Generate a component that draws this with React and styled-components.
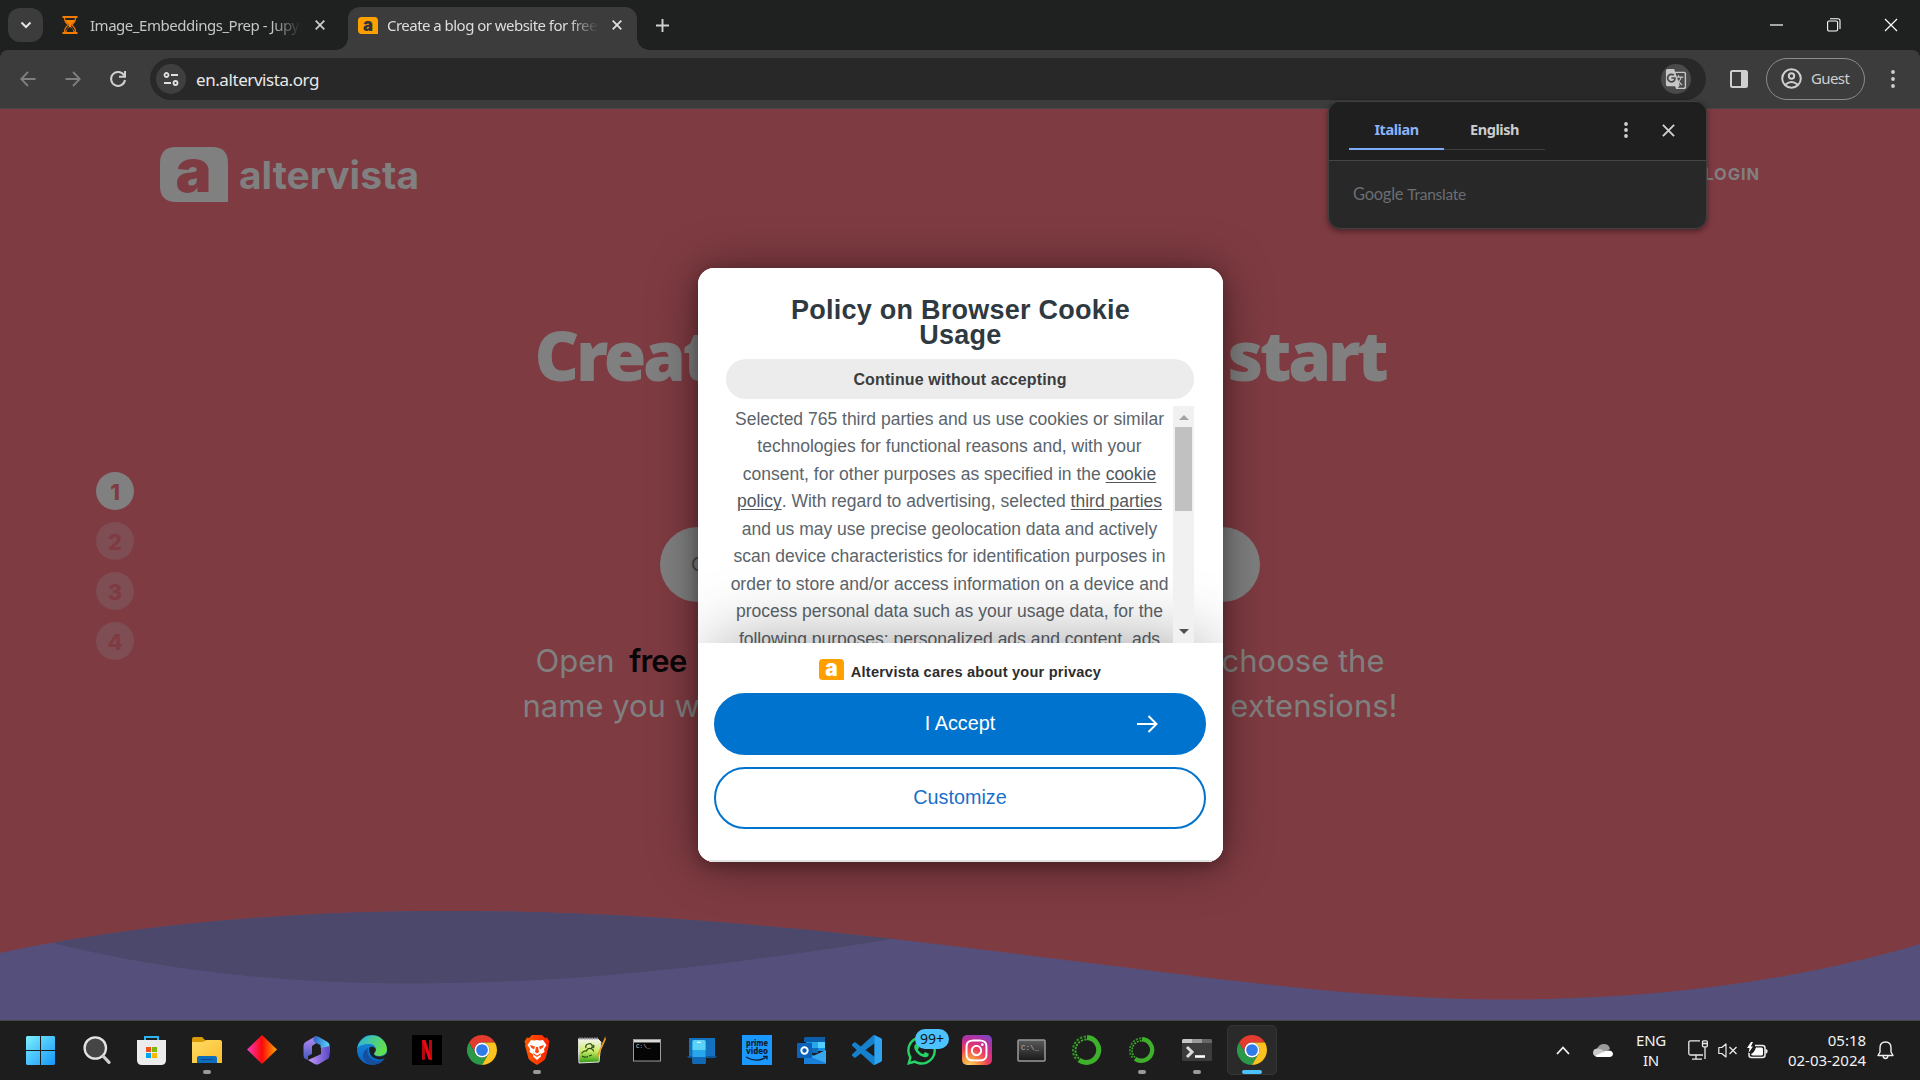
import React from "react";
import styled, { createGlobalStyle, css } from "styled-components";
import { MdGTranslate } from "react-icons/md";
import { FaWhatsapp, FaInstagram } from "react-icons/fa";

const ui = `"Noto Sans", "Open Sans", sans-serif`;
const arial = `"Liberation Sans", Arial, sans-serif`;
const geo = `Inter, "Open Sans", sans-serif`;

const Global = createGlobalStyle`
  *, *::before, *::after { box-sizing: border-box; }
  body { margin: 0; background: #1d1d1d; overflow: hidden; }
  svg { display: block; flex: none; }
  button { font: inherit; border: 0; padding: 0; background: none; color: inherit; }
`;

const Screen = styled.div`
  width: 1920px;
  height: 1080px;
  display: flex;
  flex-direction: column;
  font-family: ${ui};
  overflow: hidden;
`;

/* ---------- browser frame ---------- */
const TabStrip = styled.div`
  height: 50px;
  flex: none;
  display: flex;
  align-items: flex-end;
  background: #1f2120;
  padding-left: 8px;
`;
const TabSearch = styled.button`
  width: 35px;
  height: 34px;
  margin-bottom: 8px;
  border-radius: 12px;
  background: #3c3c3c;
  display: grid;
  place-items: center;
`;
const Tab = styled.div`
  position: relative;
  height: 43px;
  width: ${(p) => p.$w}px;
  padding: 0 10px 7px ${(p) => p.$pl}px;
  display: flex;
  align-items: center;
  color: ${(p) => (p.$active ? "#dedede" : "#c4c7c5")};
  ${(p) =>
    p.$active &&
    css`
      background: #3c3c3c;
      border-radius: 12px 12px 0 0;
      &::before,
      &::after {
        content: "";
        position: absolute;
        bottom: 0;
        width: 12px;
        height: 12px;
      }
      &::before {
        left: -12px;
        background: radial-gradient(circle at 0 0, transparent 11.5px, #3c3c3c 12px);
      }
      &::after {
        right: -12px;
        background: radial-gradient(circle at 100% 0, transparent 11.5px, #3c3c3c 12px);
      }
    `}
`;
const TabTitle = styled.span`
  width: 211px;
  margin-left: ${(p) => p.$ml}px;
  margin-right: 14px;
  overflow: hidden;
  white-space: nowrap;
  font-size: 15px;
  line-height: 22px;
  letter-spacing: ${(p) => p.$ls}px;
  mask-image: linear-gradient(to right, #000 86%, transparent 100%);
`;
const NewTab = styled.div`
  width: 48px;
  height: 50px;
  display: grid;
  place-items: center;
  padding: 0 0 0 2px;
`;
const WinControls = styled.div`
  margin-left: auto;
  height: 50px;
  display: flex;
  align-items: center;
  padding-right: 1px;
`;
const WinButton = styled.div`
  width: 57px;
  height: 48px;
  display: grid;
  place-items: center;
`;
const Toolbar = styled.div`
  height: 59px;
  flex: none;
  background: #3c3c3c;
  border-bottom: 1px solid #4b4744;
  border-radius: 8px 8px 0 0;
  display: flex;
  align-items: center;
`;
const ToolbarBack = styled.div`
  background: #1f2120;
`;
const NavButton = styled.div`
  width: 45px;
  display: grid;
  place-items: center;
`;
const Nav = styled.div`
  display: flex;
  padding-left: 5px;
  width: 150px;
`;
const Omnibox = styled.div`
  width: 1556px;
  height: 42px;
  border-radius: 21px;
  background: #282828;
  display: flex;
  align-items: center;
  padding: 0 15px 0 6px;
`;
const RoundChip = styled.div`
  width: 30px;
  height: 30px;
  border-radius: 50%;
  background: ${(p) => p.$bg};
  color: #c7c7c7;
  display: grid;
  place-items: center;
`;
const Url = styled.span`
  flex: 1;
  margin-left: 10px;
  color: #e8e8e8;
  font-size: 17px;
  letter-spacing: -0.43px;
`;
const GuestPill = styled.div`
  width: 99px;
  height: 42px;
  margin-left: 18px;
  border: 1px solid #8c8c8c;
  border-radius: 21px;
  display: flex;
  align-items: center;
  padding: 0 0 2px 14px;
  gap: 9px;
  color: #cfcfcf;
  font-size: 15px;
  letter-spacing: -0.6px;
`;
const SidePanel = styled.div`
  margin-left: 24px;
`;
const Menu = styled.div`
  width: 54px;
  padding-left: 1px;
  display: grid;
  place-items: center;
`;

/* ---------- translate bubble ---------- */
const Bubble = styled.div`
  position: absolute;
  z-index: 5;
  left: 1328px;
  top: 101px;
  width: 379px;
  height: 128px;
  border-radius: 12px;
  border: 1px solid #3f4042;
  background: #282828;
  box-shadow: 0 2px 6px rgba(0, 0, 0, 0.45);
  overflow: hidden;
`;
const BubbleTop = styled.div`
  height: 59px;
  background: #1f1f1f;
  border-bottom: 1px solid #444548;
  display: flex;
  padding: 8px 0 0 20px;
`;
const Lang = styled.div`
  width: ${(p) => p.$w}px;
  height: 40px;
  display: grid;
  place-items: center;
  padding-bottom: 1px;
  font-size: 14.5px;
  font-weight: 700;
  letter-spacing: -0.45px;
  color: ${(p) => (p.$on ? "#8ab4f8" : "#cdcdcd")};
  border-bottom: ${(p) => (p.$on ? "2px solid #7cacf8" : "1px solid #3d3e40")};
`;
const BubbleIcon = styled.div`
  width: 42px;
  height: 40px;
  margin-left: ${(p) => p.$ml || 0}px;
  display: grid;
  place-items: center;
`;
const GoogleTranslate = styled.div`
  padding: 21px 0 0 24px;
  font-family: Lato, sans-serif;
  font-size: 16.5px;
  line-height: 24px;
  letter-spacing: -0.25px;
  color: #6b6e73;
  & span { font-size: 15.5px; }
`;

/* ---------- web page ---------- */
const Page = styled.div`
  position: relative;
  flex: none;
  height: 911px;
  background: #7f3b42;
  display: flex;
  flex-direction: column;
  overflow: hidden;
  color: #808080;
  font-family: ${geo};
`;
const Header = styled.div`
  height: 93px;
  padding: 38px 160px 0 160px;
  display: flex;
  justify-content: space-between;
`;
const Login = styled.span`
  font-size: 16.5px;
  line-height: 54px;
  font-weight: 700;
  letter-spacing: 0.9px;
`;
const Body = styled.div`
  display: grid;
  grid-template-columns: 134px 1fr 134px;
`;
const Steps = styled.div`
  display: flex;
  flex-direction: column;
  gap: 12px;
  padding: 270px 0 0 96px;
`;
const Step = styled.div`
  width: 38px;
  height: 38px;
  border-radius: 50%;
  background: ${(p) => (p.$on ? "#808080" : "#7f4e55")};
  color: #7f3b42;
  font-weight: 800;
  font-size: 22px;
  line-height: 41px;
  text-align: center;
`;
const Hero = styled.div`
  display: flex;
  flex-direction: column;
  align-items: center;
`;
const Spread = styled.div`
  display: flex;
  justify-content: space-between;
  white-space: pre;
`;
const Headline = styled(Spread)`
  width: 851px;
  margin-top: 105px;
  font-family: "Noto Sans", sans-serif;
  font-weight: 900;
  font-size: 69px;
  line-height: 94px;
  letter-spacing: -3.3px;
`;
const NameField = styled.div`
  width: 600px;
  height: 75px;
  margin-top: 126px;
  border-radius: 38px;
  background: #808080;
  color: #454545;
  padding-left: 31px;
  font-size: 19px;
  line-height: 75px;
`;
const Lead = styled(Spread)`
  width: ${(p) => p.$w}px;
  margin-top: ${(p) => p.$mt || 0}px;
  font-size: 31px;
  font-weight: 400;
  line-height: 45px;
  letter-spacing: ${(p) => p.$ls}px;
  & b { color: #0a0607; font-weight: 600; letter-spacing: -0.8px; margin-left: 6px; }
`;
const Waves = styled.div`
  margin-top: auto;
`;

/* ---------- consent dialog ---------- */
const Dialog = styled.div`
  position: absolute;
  left: 698px;
  top: 159px;
  width: 525px;
  height: 594px;
  border-radius: 16px;
  background: #fff;
  overflow: hidden;
  display: flex;
  flex-direction: column;
  font-family: ${arial};
`;
const DialogShade = styled(Dialog)`
  overflow: visible;
  box-shadow: 0 4px 14px rgba(0, 0, 0, 0.25), 0 2px 50px rgba(0, 0, 0, 0.42);
`;
const DialogTitle = styled.h1`
  margin: 30px 0 0;
  text-align: center;
  font-size: 27px;
  line-height: 25px;
  letter-spacing: 0.25px;
  font-weight: 700;
  color: #2f3941;
`;
const ContinueButton = styled.button`
  display: block;
  height: 40px;
  margin: 11px 29px 7px 28px;
  padding-top: 1px;
  flex: none;
  border-radius: 20px;
  background: #ececec;
  color: #3c3c3c;
  font-weight: 700;
  font-size: 16px;
  letter-spacing: 0.13px;
`;
const ScrollArea = styled.div`
  height: 237px;
  flex: none;
  margin: 0 29px 0 28px;
  display: flex;
  overflow: hidden;
`;
const Copy = styled.div`
  flex: 1;
  text-align: center;
  color: #5b646b;
  font-size: 17.5px;
  line-height: 27.45px;
  white-space: nowrap;
  & u { text-underline-offset: 2px; text-decoration-thickness: 1px; color: #50585e; }
`;
const Line = styled.div`
  display: flex;
  justify-content: center;
  white-space: pre;
`;
const Scrollbar = styled.div`
  position: relative;
  z-index: 2;
  width: 21px;
  background: #f1f1f1;
  display: flex;
  flex-direction: column;
  align-items: center;
  padding: 9px 0;
`;
const Thumb = styled.div`
  width: 17px;
  height: 84px;
  margin: 7px 0 auto;
  background: #c1c1c1;
`;
const Caret = styled.div`
  width: 0;
  height: 0;
  border: 5px solid transparent;
  ${(p) =>
    p.$down
      ? css`border-top-color: #505050; border-bottom-width: 0;`
      : css`border-bottom-color: #a3a3a3; border-top-width: 0;`}
`;
const Footer = styled.div`
  position: relative;
  flex: 1;
  background: #fff;
  border-bottom: 2px solid #e2e2e2;
  padding: 16px 17px 0 16px;
  display: flex;
  flex-direction: column;
  box-shadow: 0 -18px 70px -18px rgba(0, 0, 0, 0.38);
`;
const Cares = styled.div`
  height: 20px;
  display: flex;
  justify-content: center;
  gap: 7px;
  color: #2d2d2d;
  font-size: 14.6px;
  line-height: 27px;
  letter-spacing: 0.2px;
  font-weight: 700;
`;
const BigButton = styled.button`
  position: relative;
  width: 492px;
  height: 62px;
  flex: none;
  margin-top: ${(p) => p.$mt}px;
  padding-bottom: 2px;
  border-radius: 31px;
  border: 2px solid #0073ce;
  background: ${(p) => (p.$solid ? "#0073ce" : "#fff")};
  color: ${(p) => (p.$solid ? "#fff" : "#1a70c8")};
  font-size: 19.8px;
`;
const ArrowSlot = styled.span`
  position: absolute;
  right: 46px;
  top: 20px;
`;

/* ---------- taskbar ---------- */
const Taskbar = styled.div`
  height: 60px;
  flex: none;
  background: #1d1d1d;
  border-top: 1px solid #464846;
  display: flex;
  padding-left: 14px;
  color: #f2f2f2;
`;
const Slot = styled.div`
  position: relative;
  width: 55px;
  height: 58px;
  display: grid;
  place-items: center;
`;
const ActiveTile = styled.div`
  width: 50px;
  height: 50px;
  margin: -1px 0 0 0;
  border-radius: 5px;
  border: 1px solid #353535;
  background: #2a2a2a;
  display: grid;
  place-items: center;
`;
const Indicator = styled.i`
  position: absolute;
  bottom: 5px;
  left: 50%;
  transform: translateX(-50%);
  height: 4px;
  border-radius: 2px;
  width: ${(p) => (p.$active ? 20 : 8)}px;
  background: ${(p) => (p.$active ? "#4cc2ff" : "#9a9a9a")};
`;
const CountBadge = styled.span`
  position: absolute;
  left: 21px;
  top: 8px;
  width: 34px;
  height: 20px;
  border-radius: 10px;
  background: #4cc2ff;
  color: #101820;
  font-size: 14px;
  line-height: 20px;
  text-align: center;
`;
const Tray = styled.div`
  margin-left: auto;
  height: 58px;
  display: flex;
  align-items: center;
  padding-right: 26px;
`;
const TrayCell = styled.div`
  margin-left: ${(p) => p.$ml}px;
`;
const TrayText = styled.div`
  margin-left: ${(p) => p.$ml}px;
  padding-bottom: 1px;
  width: ${(p) => p.$w}px;
  text-align: ${(p) => p.$align};
  font-size: 15px;
  line-height: 20px;
  letter-spacing: ${(p) => p.$ls}px;
  white-space: nowrap;
`;

/* ---------- glyphs ---------- */
const Svg = ({ w, h = w, vb, children, ...r }) => (
  <svg width={w} height={h} viewBox={vb || `0 0 ${w} ${h}`} fill="none" {...r}>{children}</svg>
);
const Cross = ({ s = 10, c = "#d0d0d0", w = 1.7 }) => (
  <Svg w={s} vb="0 0 10 10"><path d="M.7.7l8.6 8.6M9.3.7L.7 9.3" stroke={c} strokeWidth={w * 10 / s} /></Svg>
);
const Dots = ({ h = 18 }) => (
  <Svg w={4} h={h}>
    {[2, h / 2, h - 2].map((y) => <circle key={y} cx="2" cy={y} r="1.9" fill="#cfcfcf" />)}
  </Svg>
);
const Mark = ({ w, h, bg, fg, r = 10 }) => (
  <Svg w={w} h={h} vb="0 0 68 55" preserveAspectRatio="none">
    <path d={`M${r + 6} 0H${62 - r}Q68 0 68 ${r + 6}V55H${r + 6}Q0 55 0 ${49 - r}V${r + 6}Q0 0 ${r + 6} 0Z`} fill={bg} />
    <text x="34" y="44.5" textAnchor="middle" textLength="34" lengthAdjust="spacingAndGlyphs" fontFamily="Inter, sans-serif" fontWeight="900" fontSize="60" fill={fg}>a</text>
  </Svg>
);
const Chrome = () => (
  <Svg w={30} vb="0 0 48 48">
    <path d="M24 12h20.78a24 24 0 0 0-41.57 0L13.6 30A12 12 0 0 1 24 12z" fill="#e33b2e" />
    <path d="M13.6 30L3.21 12A24 24 0 0 0 24 48l10.39-18A12 12 0 0 1 13.6 30z" fill="#2a9a48" />
    <path d="M34.39 30L24 48a24 24 0 0 0 20.78-36H24a12 12 0 0 1 10.39 18z" fill="#fcc31e" />
    <circle cx="24" cy="24" r="12" fill="#fff" /><circle cx="24" cy="24" r="9.4" fill="#2f7bea" />
  </Svg>
);
const Grad = ({ id, a, b, m, x2 = 1, y2 = 1 }) => (
  <linearGradient id={id} x1="0" y1="0" x2={x2} y2={y2}>
    <stop stopColor={a} />{m && <stop offset=".5" stopColor={m} />}<stop offset="1" stopColor={b} />
  </linearGradient>
);
const Windows = () => (
  <Svg w={29} style={{ marginRight: 2 }}>
    <defs><linearGradient id="win" gradientUnits="userSpaceOnUse" x1="0" y1="0" x2="29" y2="29"><stop stopColor="#7cf0ff" /><stop offset="1" stopColor="#1496f8" /></linearGradient></defs>
    <path d="M1 0h13v14H0V1zM15 0h13l1 1v13H15zM0 15h14v14H1l-1-1zM15 15h14v13l-1 1H15z" fill="url(#win)" />
  </Svg>
);
const Search = () => (
  <Svg w={28}>
    <circle cx="12.3" cy="12" r="10.7" fill="#454545" stroke="#e4e4e4" strokeWidth="2.3" />
    <path d="M20 20l6 6.3" stroke="#cfcfcf" strokeWidth="3.2" strokeLinecap="round" />
  </Svg>
);
const Store = () => (
  <Svg w={29}>
    <path d="M8 5V1h13v4" stroke="#2cb5f0" strokeWidth="2" />
    <path d="M0 4h29v20q0 5-5 5H5q-5 0-5-5z" fill="#ececec" />
    <path d="M9 11h5v5H9z" fill="#f25022" /><path d="M15 11h5v5h-5z" fill="#7fba00" />
    <path d="M9 17h5v5H9z" fill="#00a4ef" /><path d="M15 17h5v5h-5z" fill="#ffb900" />
  </Svg>
);
const Folder = () => (
  <Svg w={30} h={27}>
    <defs><Grad id="fo" a="#ffdb66" b="#fbbd2c" /></defs>
    <path d="M0 2q0-2 2-2h8l3 3v5H0z" fill="#d99a07" />
    <path d="M0 5h11l3-2h14q2 0 2 2v21H0z" fill="url(#fo)" />
    <path d="M5 26v-5q0-2 2-2h16q2 0 2 2v5z" fill="#0c6cbd" /><path d="M9 22.5h12" stroke="#084a88" />
  </Svg>
);
const Diamond = () => (
  <Svg w={30}><defs><linearGradient id="di"><stop stopColor="#f43ac0" /><stop offset=".5" stopColor="#fb0a0a" /><stop offset="1" stopColor="#ffa800" /></linearGradient></defs>
    <path d="M15 0l15 14.5L15 29 0 14.5z" fill="url(#di)" /></Svg>
);
const M365 = () => (
  <Svg w={27} h={29}>
    <defs><Grad id="ma" a="#b78cf0" b="#4558c4" x2={0} /><Grad id="mb" a="#2c5cc4" b="#58d0f8" x2={1} y2={0.3} /><Grad id="mc" a="#c79af6" b="#5a48c8" x2={1} y2={0} /></defs>
    <path d="M13 0L2.500 6Q.5 7.200.5 10v9.500q0 2.300 2 3.500l2.500 1V20l4-2V10l4.500-3z" fill="url(#ma)" />
    <path d="M11.500 1Q13.500-.3 16 1l8.500 5q2 1.200 2 3.500V17l-9-5V9L12 6.500q-2-1-1.500-4z" fill="url(#mb)" />
    <path d="M26.500 10v9.500q0 2.300-2 3.500L16 28q-2 1.200-4.500 0L5 24l4.500-2 8.500-4V12z" fill="url(#mc)" />
    <path d="M13.500 9l4.500 2.700v5.600L13.500 20 9 17.300v-5.600z" fill="#1d1d1d" />
  </Svg>
);
const Edge = () => (
  <Svg w={30}>
    <defs><Grad id="ea" a="#2ab0e8" b="#62e04c" x2={1} y2={0.3} /><Grad id="eb" a="#1590dc" b="#0a5fc0" x2={0} /></defs>
    <circle cx="15" cy="15" r="15" fill="url(#eb)" />
    <path d="M.3 13A15 15 0 0 1 30 14c0 5-4 7-8 7-3 0-5-1-5-2.500 0-1 2-1.500 2-4C19 11 16 9 12 9 6 9 2 11 .3 13z" fill="url(#ea)" />
    <path d="M11 13c-2 6 2 13 10 13 3 0 5-1 7-3-3 5-8 7-13 7-6-1-9-6-9-9.500 0-3 2-6 5-7.500z" fill="#144f9e" />
    <path d="M12 13q3-3 6 0c2 3-1 4-1 6 0 2 4 3 7 2.500q3-.5 6-3l0 2q-2 4-8 4-10-1-10-11.500z" fill="#1d1d1d" />
  </Svg>
);
const Netflix = () => (
  <Svg w={30}><path d="M0 0h30v30H0z" fill="#000" />
    <path d="M10 5h3v19.500l-3 .5zM17 5h3v20l-3-.5z" fill="#b4070f" /><path d="M10 5h3.500L20 25l-3.500-.5z" fill="#e50914" /></Svg>
);
const BraveIcon = () => (
  <Svg w={26} h={30}>
    <defs><Grad id="br" a="#ff5a00" b="#ff2100" x2={1} y2={0} /></defs>
    <path d="M5 3L8 0h10l3 3 2-.5 2.500 4-1 3 .5 1-3.500 13Q21 25 13 30 5 25 4.500 23.500L1 10.500l.5-1-1-3L3 2.500z" fill="url(#br)" />
    <path d="M7 5l3 .5 3-.5 3 .5 3-.5 3.500 5-2.500 4 .5 3-4 2.500.5 2-4 3.500-4-3.500.5-2L5.500 17l.5-3-2.500-4z" fill="#fff" />
    <path d="M6 10l5 1.500-1 3-3-2zM20 10l-5 1.500 1 3 3-2zM12 12h2l1 5-2 1.500-2-1.500zM9 18l4 2.500 4-2.500-1 2-3 2-3-2z" fill="#fb4a10" />
  </Svg>
);
const Npp = () => (
  <Svg w={28}>
    <defs><Grad id="np" a="#f4f4ee" m="#cdec6a" b="#2f9c10" x2={0} /></defs>
    <path d="M0 3h20l3 3-2 20-20 1z" fill="url(#np)" stroke="#e2e2e2" />
    <path d="M1 2.500h19" stroke="#9a9a9a" strokeWidth="2" strokeDasharray="1.500 1" />
    <path d="M3.500 17.500q2-3 5-2.500 1-3 4-2.500 3 .5 3 3M4 20q3 2 6 .5M8 12q-1-3 2-4t4 1q1 3-2 4M15 9q2 1 0 3M11 20l3-1" stroke="#2a4c12" strokeWidth="1.200" />
    <path d="M27 1l-8 18-1 4 2.500-3L28 3z" fill="#e8a020" /><path d="M26 2l1.500-2 .5 2.500z" fill="#b03020" />
  </Svg>
);
const Cmd = () => (
  <Svg w={28} h={23}><rect x=".5" y=".5" width="27" height="21.500" fill="#050505" stroke="#9c9c9c" /><path d="M1 1h26v2.500H1z" fill="#d8d8d8" />
    <text x="3" y="9" fontFamily="Liberation Mono" fontSize="6" fill="#d0d0d0">C:\_</text></Svg>
);
const Phone = () => (
  <Svg w={30} h={27}><path d="M2 1h26v18H2z" fill="#1272c0" /><path d="M0 19h30l-2 2H2z" fill="#0c5a9e" />
    <rect x="5.500" y="3" width="13" height="24" rx="1.500" fill="#28a8ea" /><path d="M5.500 4.500q0-1.500 1.500-1.500h10q1.500 0 1.500 1.500V13h-13z" fill="#5bd2f8" /><path d="M5.500 20h13v5q0 2-2 2h-9q-2 0-2-2z" fill="#1168b4" /><path d="M10 5.300h4" stroke="#fff" /></Svg>
);
const Prime = () => (
  <Svg w={30}><path d="M0 0h30v30H0z" fill="#1a98ff" />
    <g fontFamily="Noto Sans" fontWeight="800" fontSize="9.500" fill="#0b1c2c" textAnchor="middle"><text x="15" y="10.500" textLength="22" lengthAdjust="spacingAndGlyphs">prime</text><text x="15" y="19" textLength="22" lengthAdjust="spacingAndGlyphs">video</text></g>
    <path d="M4 22q10 6 20 .5M21 21.500h4v3" stroke="#0b1c2c" strokeWidth="1.300" /></Svg>
);
const Outlook = () => (
  <Svg w={29} h={27}><path d="M9 0h19v14H9z" fill="#1490df" /><path d="M7 1.500Q7 0 8.500 0H27q1 0 1 1v4H7z" fill="#0c5ea8" /><path d="M21 5h7v6h-7z" fill="#50d0ff" /><path d="M15 5h6v6h-6z" fill="#28a8ea" /><path d="M15 11h6v5h-6z" fill="#0f6cbd" />
    <path d="M7 14l11 5 11-6v14H7z" fill="#1a7fd8" /><path d="M29 13v13L14 20z" fill="#38a8ee" /><rect y="6" width="15" height="15" rx="1" fill="#0c62b8" />
    <circle cx="7.500" cy="13.500" r="3.200" stroke="#fff" strokeWidth="1.900" /></Svg>
);
const Code = () => (
  <Svg w={30} vb="0 0 24 24"><path d="M23.15 2.587L18.21.21a1.494 1.494 0 0 0-1.705.29l-9.46 8.63-4.12-3.128a.999.999 0 0 0-1.276.057L.327 7.261A1 1 0 0 0 .326 8.740L3.899 12 .326 15.260a1 1 0 0 0 .001 1.479L1.650 17.940a.999.999 0 0 0 1.276.057l4.120-3.128 9.460 8.630a1.492 1.492 0 0 0 1.704.290l4.942-2.377A1.500 1.500 0 0 0 24 20.060V3.939a1.500 1.500 0 0 0-.85-1.352zm-5.146 14.861L10.826 12l7.178-5.448v10.896z" fill="#1580cc" />
    <path d="M18 .1l5.150 2.487a1.500 1.500 0 0 1 .85 1.352V20.060a1.500 1.500 0 0 1-.85 1.350L18 23.900z" fill="#2ea3f0" /></Svg>
);
const InstaTile = styled.div`
  width: 30px;
  height: 30px;
  border-radius: 5px;
  color: #fff;
  display: grid;
  place-items: center;
  background: radial-gradient(circle at 25% 105%, #fed576 0, #f9a03f 20%, #ee3e5c 48%, #c42d95 68%, #6a4bd0 100%);
`;
const Cmd2 = () => (
  <Svg w={29} h={23}><defs><Grad id="cm" a="#5a5a5a" b="#181818" x2={0} /></defs><rect x="1" y="1" width="27" height="21" rx="1" fill="url(#cm)" stroke="#9a9a9a" strokeWidth="1.500" />
    <text x="4" y="11" fontFamily="Liberation Mono" fontSize="7.500" fill="#b5b5b5">C:\_</text></Svg>
);
const Anaconda = ({ s }) => (
  <Svg w={s} vb="0 0 30 30"><path d="M15 2.600A12.400 12.400 0 1 1 7 25" stroke="#3fb02c" strokeWidth="5" />
    <path d="M14.500 4.500A11 11 0 0 0 7 23.500" stroke="#3fb02c" strokeWidth="1.800" strokeDasharray="2.200 1.200" /><path d="M14 1.500A13.800 13.800 0 0 0 5 25" stroke="#2f9022" strokeWidth="2.200" strokeDasharray="2.400 1.500" /></Svg>
);
const Terminal = () => (
  <Svg w={30} h={22}><rect width="30" height="22" rx="1.500" fill="#3c3c3c" /><path d="M0 1.500Q0 0 1.500 0H10v4H0z" fill="#c8c8c8" /><path d="M10 0h10v4H10z" fill="#9a9a9a" /><path d="M20 0h8.500Q30 0 30 1.500V4H20z" fill="#666" />
    <path d="M5 8l5 5-5 5" stroke="#dcdcdc" strokeWidth="3" /><path d="M13 17.500h10" stroke="#fff" strokeWidth="2.600" /></Svg>
);

const apps = [
  [<Windows />], [<Search />], [<Store />], [<Folder />, true], [<Diamond />], [<M365 />], [<Edge />], [<Netflix />], [<Chrome />],
  [<BraveIcon />, true], [<Npp />], [<Cmd />], [<Phone />], [<Prime />], [<Outlook />], [<Code />],
  [<><FaWhatsapp size={33} color="#25d366" /><CountBadge>99+</CountBadge></>],
  [<InstaTile><FaInstagram size={25} /></InstaTile>], [<Cmd2 />], [<Anaconda s={30} />], [<Anaconda s={26} />, true], [<Terminal />, true],
];

export default function App() {
  return (
    <Screen>
      <Global />
      <TabStrip>
        <TabSearch><Svg w={12} h={8}><path d="M1.500 1.500L6 6l4.500-4.500" stroke="#e3e3e3" strokeWidth="2" /></Svg></TabSearch>
        <Tab $w={305} $pl={19}>
          <Svg w={16} h={18}><path d="M.5 1h15M.5 17h15" stroke="#f57c00" strokeWidth="1.800" /><path d="M2.500 2q0 4.500 4 7-4 2.500-4 7M13.500 2q0 4.500-4 7 4 2.500 4 7" stroke="#e87400" strokeWidth="1.300" /><path d="M3 4h10q-1 3-4 4.500v2l4 5.500H3l4-5.500v-2Q4 7 3 4z" fill="#f98200" /><path d="M4.500 16q.5-4 3.500-5 3 1 3.500 5z" fill="#1f2120" /></Svg>
          <TabTitle $ml={12} $ls={-0.47}>Image_Embeddings_Prep - Jupyter</TabTitle>
          <Cross />
        </Tab>
        <Tab $active $w={289} $pl={10}>
          <Mark w={20} h={17} bg="#ffa000" fg="#30343a" r={6} />
          <TabTitle $ml={9} $ls={-0.53}>Create a blog or website for free | Altervista</TabTitle>
          <Cross c="#e3e3e3" />
        </Tab>
        <NewTab><Svg w={13}><path d="M6.500 0v13M0 6.500h13" stroke="#d0d0d0" strokeWidth="1.900" /></Svg></NewTab>
        <WinControls>
          <WinButton><Svg w={13} h={2}><path d="M0 1h13" stroke="#fff" strokeWidth="1.200" /></Svg></WinButton>
          <WinButton><Svg w={14}><rect x=".6" y="3" width="10" height="10" rx="1.500" stroke="#fff" strokeWidth="1.100" /><path d="M3 .8h8q2 0 2 2V11" stroke="#fff" strokeWidth="1.100" /></Svg></WinButton>
          <WinButton><Cross s={14} c="#fff" w={1.2} /></WinButton>
        </WinControls>
      </TabStrip>
      <ToolbarBack>
        <Toolbar>
          <Nav>
            <NavButton><Svg w={16}><path d="M15.500 8H2M8 1L1.200 8 8 15" stroke="#7f7f7f" strokeWidth="1.800" /></Svg></NavButton>
            <NavButton><Svg w={16}><path d="M.5 8H14M8 1l6.800 7L8 15" stroke="#7f7f7f" strokeWidth="1.800" /></Svg></NavButton>
            <NavButton><Svg w={18}><path d="M15.200 5.500A7 7 0 1 0 16 10" stroke="#d0d0d0" strokeWidth="2" /><path d="M16 1v5.800h-6" stroke="#d0d0d0" strokeWidth="2" /></Svg></NavButton>
          </Nav>
          <Omnibox>
            <RoundChip $bg="#3f3f3f"><Svg w={16} h={14}><g stroke="#e0e0e0" strokeWidth="1.800"><circle cx="3.500" cy="3" r="2" /><path d="M8 3h7M1 11h7" /><circle cx="12.500" cy="11" r="2" /></g></Svg></RoundChip>
            <Url>en.altervista.org</Url>
            <RoundChip $bg="#4a4a4a"><MdGTranslate size={22} /></RoundChip>
          </Omnibox>
          <SidePanel><Svg w={18}><rect x="1" y="1" width="16" height="16" rx="1.500" stroke="#cfcfcf" strokeWidth="2" /><path d="M11 1h6v16h-6z" fill="#cfcfcf" /></Svg></SidePanel>
          <GuestPill>
            <Svg w={21}><circle cx="10.500" cy="10.500" r="9.300" stroke="#cfcfcf" strokeWidth="2" /><circle cx="10.500" cy="8" r="2.700" stroke="#cfcfcf" strokeWidth="2" /><path d="M4.500 16.500q6-5 12 0" stroke="#cfcfcf" strokeWidth="2" /></Svg>
            Guest
          </GuestPill>
          <Menu><Dots /></Menu>
        </Toolbar>
      </ToolbarBack>
      <Bubble>
        <BubbleTop>
          <Lang $on $w={95}>Italian</Lang>
          <Lang $w={101}>English</Lang>
          <BubbleIcon $ml={60}><Dots h={16} /></BubbleIcon>
          <BubbleIcon><Cross s={13} w={1.900} /></BubbleIcon>
        </BubbleTop>
        <GoogleTranslate>Google <span>Translate</span></GoogleTranslate>
      </Bubble>

      <Page>
        <Header>
          <Svg w={260} h={56}>
            <path d="M16 0H52Q68 0 68 16V55H16Q0 55 0 39V16Q0 0 16 0Z" fill="#808080" />
            <text x="33.500" y="44.500" textAnchor="middle" textLength="36" lengthAdjust="spacingAndGlyphs" fontFamily="Inter, sans-serif" fontWeight="900" fontSize="60" fill="#7f3b42">a</text>
            <text x="79" y="41.500" textLength="180" lengthAdjust="spacingAndGlyphs" fontFamily="Inter, sans-serif" fontWeight="700" fontSize="38" fill="#808080">altervista</text>
          </Svg>
          <Login>LOGIN</Login>
        </Header>
        <Body>
          <Steps>{[1, 2, 3, 4].map((n) => <Step key={n} $on={n === 1}>{n}</Step>)}</Steps>
          <Hero>
            <Headline><span>Create</span><span>start</span></Headline>
            <NameField>Choose</NameField>
            <Lead $w={849} $mt={36} $ls={0}><span>Open <b>free</b></span><span>choose the</span></Lead>
            <Lead $w={875} $ls={0}><span>name you want</span><span>extensions!</span></Lead>
          </Hero>
        </Body>
        <Waves>
          <Svg w={1920} h={111} vb="0 909 1920 111">
            <clipPath id="swell"><path d="M0 953C125 927 270 911 450 911C700 911 930 943 1122 967C1270 986 1390 999.500 1505 999.500C1660 999.500 1800 980 1920 944V1020H0Z" /></clipPath>
            <g clipPath="url(#swell)"><path d="M0 900h1920v120H0z" fill="#55507b" /><path d="M45 941C150 968 270 983.500 410 983.500C600 983.500 760 960 905 937V900H45Z" fill="#4b486b" /></g>
          </Svg>
        </Waves>
        <DialogShade />
        <Dialog>
          <DialogTitle>Policy on Browser Cookie<br />Usage</DialogTitle>
          <ContinueButton>Continue without accepting</ContinueButton>
          <ScrollArea>
            <Copy>
              <Line>Selected 765 third parties and us use cookies or similar</Line>
              <Line>technologies for functional reasons and, with your</Line>
              <Line>consent, for other purposes as specified in the <u>cookie</u></Line>
              <Line><u>policy</u>. With regard to advertising, selected <u>third parties</u></Line>
              <Line>and us may use precise geolocation data and actively</Line>
              <Line>scan device characteristics for identification purposes in</Line>
              <Line>order to store and/or access information on a device and</Line>
              <Line>process personal data such as your usage data, for the</Line>
              <Line>following purposes: personalized ads and content, ads</Line>
            </Copy>
            <Scrollbar><Caret /><Thumb /><Caret $down /></Scrollbar>
          </ScrollArea>
          <Footer>
            <Cares><Mark w={25} h={21} bg="#ffa000" fg="#fff" r={4} />Altervista cares about your privacy</Cares>
            <BigButton $solid $mt={14}>I Accept<ArrowSlot><Svg w={21} h={18}><path d="M0 9h19M11.500 1l8 8-8 8" stroke="#fff" strokeWidth="2" /></Svg></ArrowSlot></BigButton>
            <BigButton $mt={12}>Customize</BigButton>
          </Footer>
        </Dialog>
      </Page>

      <Taskbar>
        {apps.map(([icon, open], i) => <Slot key={i}>{icon}{open && <Indicator />}</Slot>)}
        <Slot><ActiveTile><Chrome /></ActiveTile><Indicator $active /></Slot>
        <Tray>
          <TrayCell><Svg w={14} h={9}><path d="M1 8l6-6.500L13 8" stroke="#f2f2f2" strokeWidth="1.800" /></Svg></TrayCell>
          <TrayCell $ml={23}><Svg w={20} h={13}><path d="M4 5q2-5 7-5t6 5l-8 4z" fill="#9a9a9a" /><path d="M3.500 12.500Q0 12 0 8.500t4-4q4-.5 7 3l-6 5z" fill="#c9c9c9" /><path d="M2 12l10-5q7-1.500 8 2.500 0 3-3 3.500H4z" fill="#fff" /></Svg></TrayCell>
          <TrayText $ml={16} $w={44} $align="center" $ls={-0.3}>ENG<br />IN</TrayText>
          <TrayCell $ml={15}><Svg w={20}><g stroke="#eaeaea" strokeWidth="1.300"><path d="M12 .8H2.500Q.8.8.8 2.500v11q0 1.500 1.500 1.500H15M8 15v4M4 19.200h10" /><rect x="14.500" y=".8" width="4.800" height="6" rx="1" /><path d="M17 7v12M15 3.500h4" /></g></Svg></TrayCell>
          <TrayCell $ml={10}><Svg w={20} h={15}><path d="M.8 4.500h3L8 1v13L3.800 10.500h-3z" stroke="#eaeaea" strokeWidth="1.200" strokeLinejoin="round" /><path d="M11.500 4l7 7M18.500 4l-7 7" stroke="#eaeaea" strokeWidth="1.300" /></Svg></TrayCell>
          <TrayCell $ml={9}><Svg w={21} h={17}><path d="M8 3.500h7.500q2.500 0 2.500 2.500v7q0 2.500-2.500 2.500h-11Q2 15.500 2 13v-2" stroke="#eee" strokeWidth="1.500" /><path d="M18.500 7q2 0 2 1.500v1.500q0 1.500-2 1.500z" fill="#eee" /><path d="M9 5.500h5.500q1.500 0 1.500 1.500v5q0 1.500-1.500 1.500H6q-1.500 0-2-1.500 3-1 5-6.500z" fill="#fff" /><path d="M4 0L0 6h2.500L1.500 11 6 4.500H3.800L6 0z" fill="#fff" /></Svg></TrayCell>
          <TrayText $ml={12} $w={86} $align="right" $ls={-0.03}>05:18<br />02-03-2024</TrayText>
          <TrayCell $ml={11}><Svg w={17} h={19}><path d="M8.500 1Q3 1 3 7v4L1 14.500h15L14 11V7q0-6-5.500-6z" stroke="#f0f0f0" strokeWidth="1.400" strokeLinejoin="round" /><path d="M6 15q.5 2.500 2.500 2.500T11 15" stroke="#f0f0f0" strokeWidth="1.400" /></Svg></TrayCell>
        </Tray>
      </Taskbar>
    </Screen>
  );
}
